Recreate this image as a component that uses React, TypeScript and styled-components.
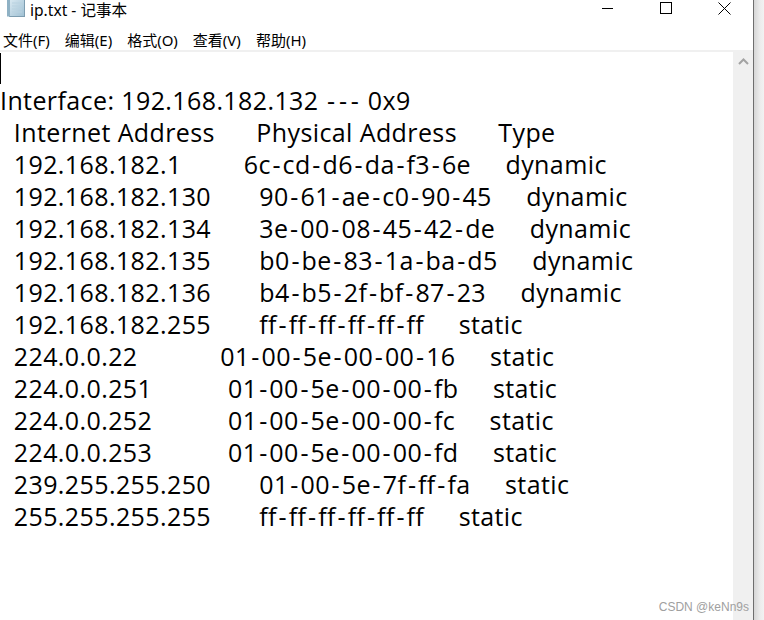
import React from 'react';
import styled, { createGlobalStyle } from 'styled-components';

const GlobalStyle = createGlobalStyle`
    html, body {
        margin: 0;
        padding: 0;
        background: #ffffff;
        overflow: hidden;
    }
`;

const pad = (s: string, n = 22) => s + ' '.repeat(Math.max(1, n - s.length));

const rows: [string, string, string][] = [
    ['192.168.182.1', '6c-cd-d6-da-f3-6e', 'dynamic'],
    ['192.168.182.130', '90-61-ae-c0-90-45', 'dynamic'],
    ['192.168.182.134', '3e-00-08-45-42-de', 'dynamic'],
    ['192.168.182.135', 'b0-be-83-1a-ba-d5', 'dynamic'],
    ['192.168.182.136', 'b4-b5-2f-bf-87-23', 'dynamic'],
    ['192.168.182.255', 'ff-ff-ff-ff-ff-ff', 'static'],
    ['224.0.0.22', '01-00-5e-00-00-16', 'static'],
    ['224.0.0.251', '01-00-5e-00-00-fb', 'static'],
    ['224.0.0.252', '01-00-5e-00-00-fc', 'static'],
    ['224.0.0.253', '01-00-5e-00-00-fd', 'static'],
    ['239.255.255.250', '01-00-5e-7f-ff-fa', 'static'],
    ['255.255.255.255', 'ff-ff-ff-ff-ff-ff', 'static'],
];

const lines = [
    'Interface: 192.168.182.132 --- 0x9',
    '  ' + pad('Internet Address') + pad('Physical Address') + 'Type',
    ...rows.map(([ip, mac, type]) => '  ' + pad(ip) + pad(mac) + type),
];

const menus = ['文件(F)', '编辑(E)', '格式(O)', '查看(V)', '帮助(H)'];

// the hyphen in the original font is wider than in Open Sans
const renderLine = (text: string) =>
    text.split('-').map((part, i) => (
        <React.Fragment key={i}>
            {i > 0 && <Hyphen>-</Hyphen>}
            {part}
        </React.Fragment>
    ));

const NotepadIcon = () => (
    <svg width="20" height="17" viewBox="0 0 20 17">
        <defs>
            <linearGradient id="np" x1="0" y1="0" x2="1" y2="1">
                <stop offset="0" stopColor="#dcebf3" />
                <stop offset="1" stopColor="#9fc0d3" />
            </linearGradient>
        </defs>
        <rect x="4.5" y="-2" width="15" height="18.5" fill="url(#np)" stroke="#7d9db0" />
        <rect x="2" y="-2" width="3" height="18.5" fill="#8fb1c4" />
        <path d="M7 3h10M7 6h10M7 9h10M7 12h10" stroke="#b9d2e0" strokeWidth="1" />
    </svg>
);

export default function App() {
    return (
        <>
            <GlobalStyle />
            <Screen>
                <Window>
                    <TitleBar>
                        <TitleIcon><NotepadIcon /></TitleIcon>
                        <TitleText>ip.txt - 记事本</TitleText>
                        <Controls>
                            <ControlButton aria-label="minimize">
                                <svg width="12" height="12" viewBox="0 0 12 12">
                                    <path d="M0 6.5h11" stroke="#000" strokeWidth="1" />
                                </svg>
                            </ControlButton>
                            <ControlButton aria-label="maximize">
                                <svg width="12" height="12" viewBox="0 0 12 12">
                                    <rect x="0.5" y="0.5" width="11" height="11" fill="none" stroke="#000" strokeWidth="1" />
                                </svg>
                            </ControlButton>
                            <ControlButton aria-label="close">
                                <svg width="13" height="13" viewBox="0 0 13 13">
                                    <path d="M0.5 0.5l12 12M12.5 0.5l-12 12" stroke="#000" strokeWidth="1" />
                                </svg>
                            </ControlButton>
                        </Controls>
                    </TitleBar>
                    <MenuBar>
                        {menus.map(m => <MenuItem key={m}>{m}</MenuItem>)}
                    </MenuBar>
                    <Divider />
                    <Body>
                        <Editor>
                            <Line><Caret /></Line>
                            {lines.map((l, i) => <Line key={i}>{renderLine(l)}</Line>)}
                        </Editor>
                        <Scrollbar>
                            <ScrollArrow>
                                <svg width="11" height="7" viewBox="0 0 11 7">
                                    <path d="M1 6l4.5-4.5L10 6" fill="none" stroke="#a3a3a3" strokeWidth="2" />
                                </svg>
                            </ScrollArrow>
                        </Scrollbar>
                    </Body>
                </Window>
                <Backdrop />
                <Watermark>CSDN @keNn9s</Watermark>
            </Screen>
        </>
    );
}

const Screen = styled.div`
    position: relative;
    width: 764px;
    height: 620px;
    display: flex;
    overflow: hidden;
`;

const Window = styled.div`
    width: 753px;
    height: 620px;
    display: flex;
    flex-direction: column;
    background: #ffffff;
    border-right: 1px solid #6e6e6e;
`;

const Backdrop = styled.div`
    flex: 1;
    background: linear-gradient(to right, #d6d6d6, #ececec 60%, #f2f2f2);
`;

const TitleBar = styled.div`
    height: 27px;
    display: flex;
    align-items: flex-start;
    font-family: "Microsoft YaHei UI", "Noto Sans", "Noto Sans CJK SC", sans-serif;
`;

const TitleIcon = styled.div`
    width: 20px;
    height: 17px;
    margin-left: 5px;
    svg { display: block; }
`;

const TitleText = styled.div`
    margin-left: 5px;
    font-size: 15.6px;
    line-height: 20px;
    color: #000;
`;

const Controls = styled.div`
    margin-left: auto;
    display: flex;
`;

const ControlButton = styled.div`
    width: 58px;
    height: 15px;
    display: flex;
    align-items: flex-start;
    justify-content: center;
    padding-top: 2px;
    svg { display: block; }
`;

const MenuBar = styled.div`
    height: 23px;
    display: flex;
    align-items: center;
    padding-left: 3px;
    gap: 15px;
    font-family: "Microsoft YaHei UI", "Noto Sans", "Noto Sans CJK SC", sans-serif;
    font-size: 15px;
    color: #000;
`;

const MenuItem = styled.div`
    white-space: nowrap;
    margin-top: 2px;
`;

const Divider = styled.div`
    height: 2px;
    background: #f0f0f0;
`;

const Body = styled.div`
    flex: 1;
    display: flex;
    min-height: 0;
`;

const Editor = styled.div`
    flex: 1;
    background: #ffffff;
    font-family: "Microsoft YaHei", "Open Sans", "Noto Sans CJK SC", sans-serif;
    font-size: 25px;
    letter-spacing: 0.4px;
    color: #000;
`;

const Line = styled.div`
    height: 32px;
    line-height: 32px;
    white-space: pre;
    display: flex;
    align-items: center;
`;

const Hyphen = styled.span`
    padding: 0 1.7px;
`;

const Caret = styled.span`
    display: block;
    width: 1px;
    height: 31px;
    background: #000;
    margin-top: 1px;
`;

const Scrollbar = styled.div`
    width: 20px;
    background: #f0f0f0;
    display: flex;
    flex-direction: column;
    align-items: center;
`;

const ScrollArrow = styled.div`
    margin-top: 6px;
    svg { display: block; }
`;

const Watermark = styled.div`
    position: absolute;
    right: 15px;
    bottom: 6px;
    font-family: "Liberation Sans", Arial, sans-serif;
    font-size: 12px;
    color: #a0a0a0;
    white-space: nowrap;
`;
